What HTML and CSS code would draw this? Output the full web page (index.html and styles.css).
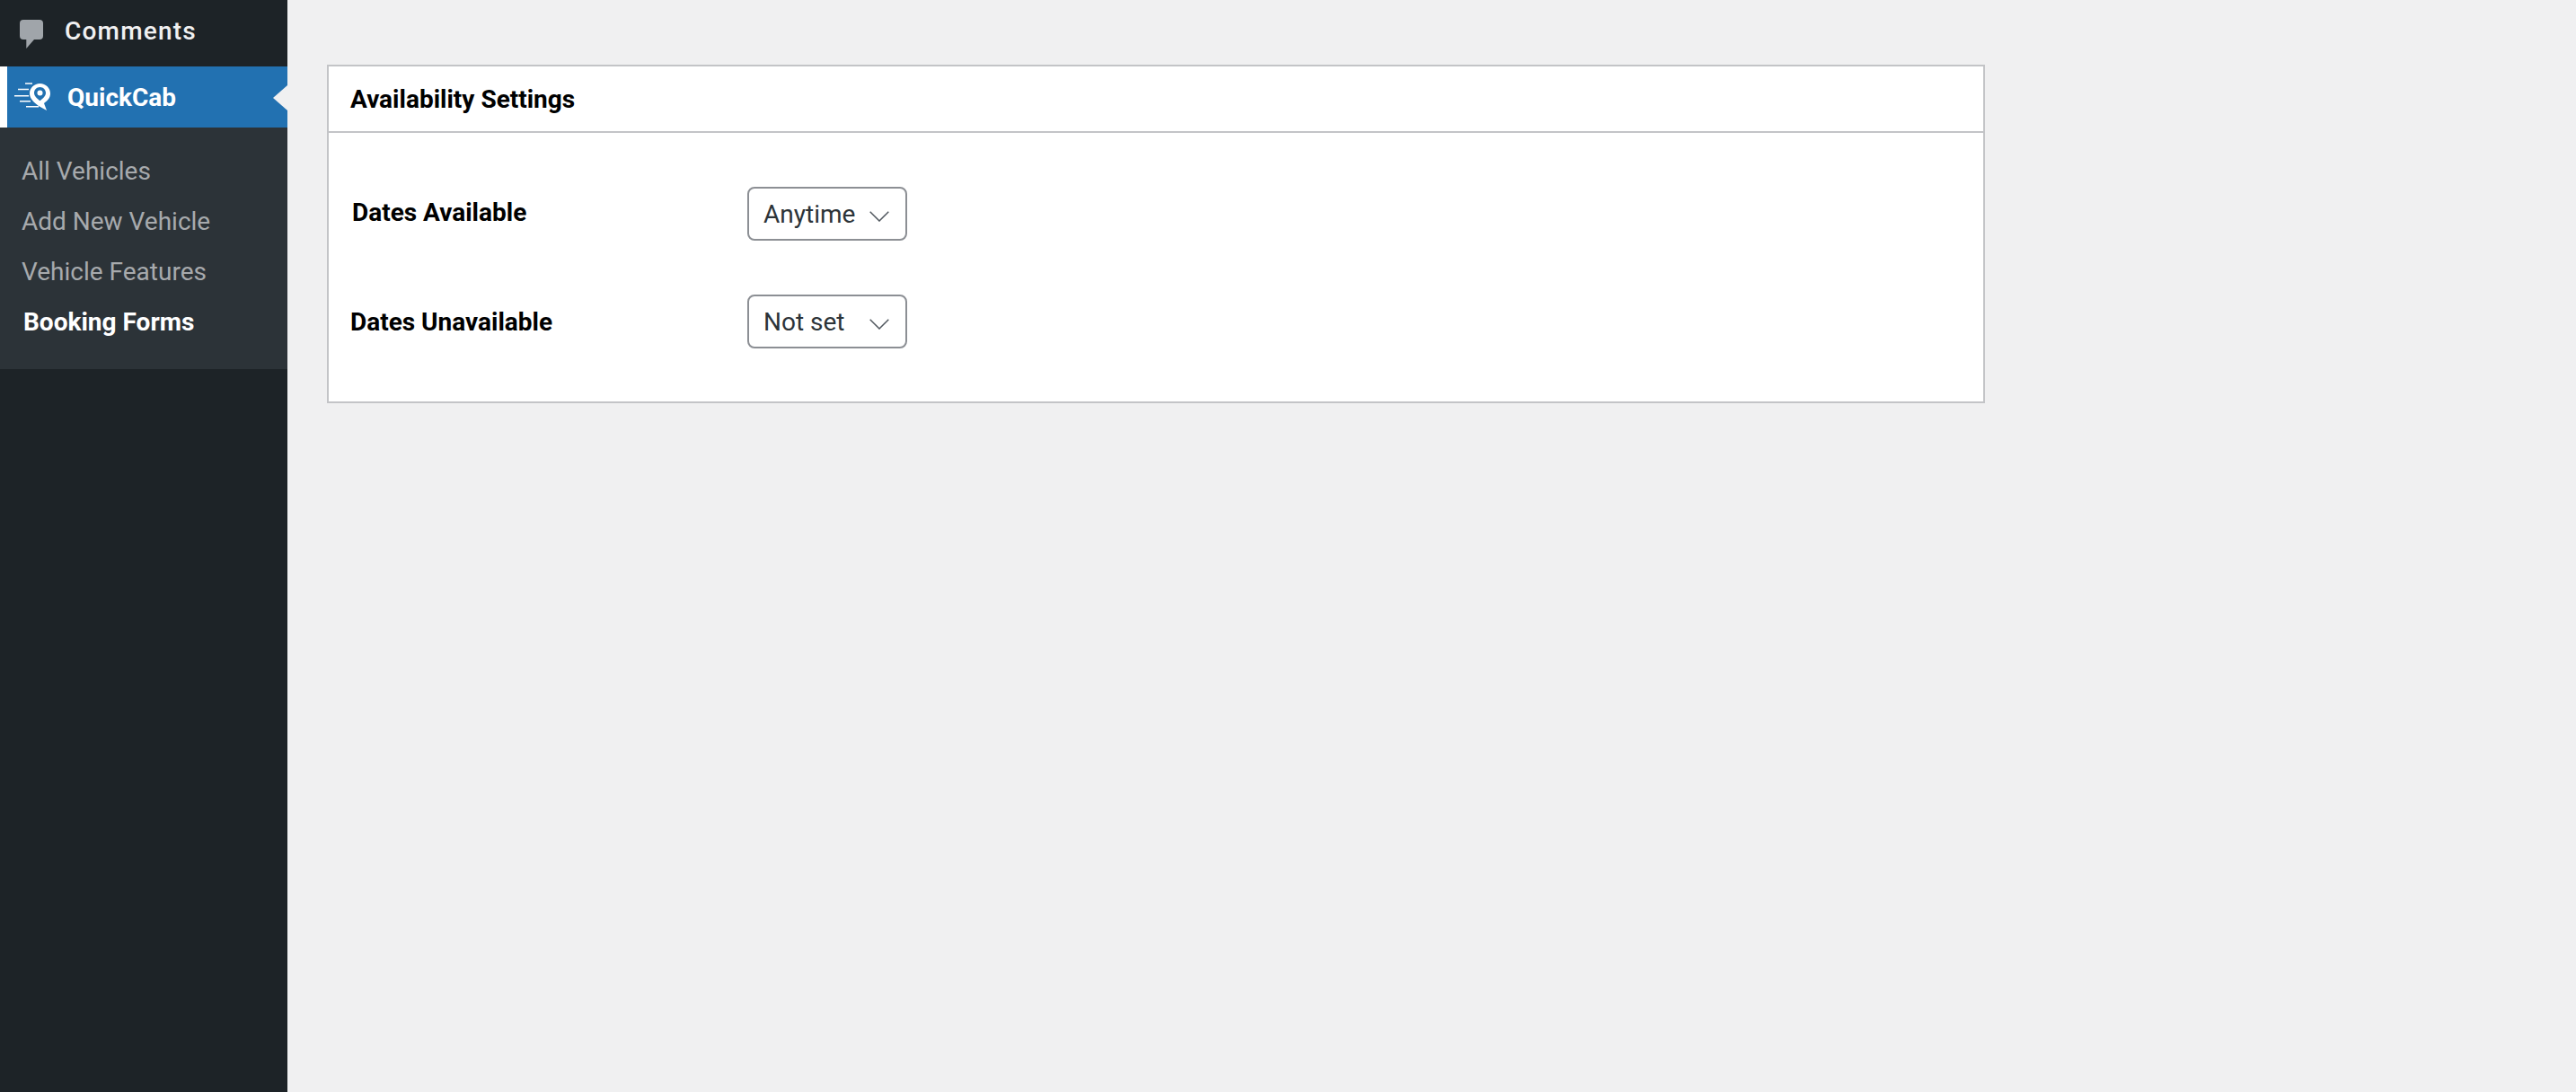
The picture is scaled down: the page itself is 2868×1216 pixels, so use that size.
FILE: index.html
```html
<!DOCTYPE html>
<html lang="en">
<head>
<meta charset="utf-8">
<title>Availability Settings</title>
<link rel="stylesheet" href="styles.css">
</head>
<body>
<div class="page">
  <nav class="sidebar">
    <a class="menu-item">
      <svg class="menu-icon" viewBox="0 0 26 32" width="26" height="32"><path d="M4 0h18a4 4 0 0 1 4 4v14a4 4 0 0 1-4 4H16l-8.700 10V22H4a4 4 0 0 1-4-4V4a4 4 0 0 1 4-4z" fill="#a0a5aa"/></svg>
      <span class="comments-label">Comments</span>
    </a>
    <a class="menu-item current">
      <svg class="brand-icon" viewBox="0 0 42 32" width="42" height="32">
        <path stroke="#fff" stroke-width="1.500" fill="none" d="M12 1h8M4 7.500h12M0 14.800h16M6 20.800h12M13 26.800h14"/>
        <path fill-rule="evenodd" fill="#fff" d="M28.500 1C22 1 17 6 17 12c0 6 5 10 10 14l9 5-3-8c4-3 7-6 7-11C40 6 35 1 28.500 1zM28.500 5c-3.600 0-6.500 2.900-6.500 6.500 0 3.300 3.200 6.300 6.500 8.800 3.300-2.500 6.500-5.500 6.500-8.800 0-3.600-2.900-6.500-6.500-6.500z"/>
        <circle cx="28.500" cy="11.500" r="3" fill="#fff"/>
      </svg>
      <span class="brand-label">QuickCab</span>
    </a>
    <ul class="submenu">
      <li>All Vehicles</li>
      <li>Add New Vehicle</li>
      <li>Vehicle Features</li>
      <li class="active">Booking Forms</li>
    </ul>
  </nav>
  <main class="content">
    <section class="card">
      <h2 class="card-title">Availability Settings</h2>
      <div class="card-body">
        <div class="row">
          <span class="field-label indent">Dates Available</span>
          <div class="select"><span>Anytime</span><svg viewBox="0 0 22 12" width="22" height="12"><path d="M.7.700L11 11 21.300.700" fill="none" stroke="#50575e" stroke-width="1.500"/></svg></div>
        </div>
        <div class="row">
          <span class="field-label">Dates Unavailable</span>
          <div class="select"><span>Not set</span><svg viewBox="0 0 22 12" width="22" height="12"><path d="M.7.700L11 11 21.300.700" fill="none" stroke="#50575e" stroke-width="1.500"/></svg></div>
        </div>
      </div>
    </section>
  </main>
</div>
</body>
</html>
```
FILE: styles.css
```css
* { box-sizing: border-box; }
html, body { margin: 0; padding: 0; }
body { background: #f0f0f1; font-family: Roboto, "Liberation Sans", sans-serif; }
.page { display: flex; width: 2868px; height: 1216px; overflow: hidden; }

.sidebar { width: 320px; flex: none; background: #1d2327; }
.menu-item { display: flex; align-items: center; position: relative; color: #f0f0f1; }
.menu-item:first-child { height: 74px; padding-left: 22px; }
.menu-icon { flex: none; margin-top: 2px; }
.comments-label { margin-left: 24px; margin-top: -4px; font-size: 28px; font-weight: 500; letter-spacing: 1.2px; line-height: 1; }
.current { height: 68px; background: #2271b1; border-left: 8px solid #fff; padding-left: 8px; color: #fff; }
.brand-icon { flex: none; }
.brand-label { margin-left: 17px; margin-top: 2px; font-size: 28px; font-weight: 700; line-height: 1; }
.current::after { content: ""; position: absolute; right: 0; top: 21px; border-style: solid; border-color: transparent #f0f0f1 transparent transparent; border-width: 14px 16px 14px 0; }

.submenu { list-style: none; margin: 0; padding: 21px 0 0; background: #2c3338; height: 269px; }
.submenu li { height: 56px; line-height: 56px; padding-left: 24px; font-size: 28px; color: #a7aaad; }
.submenu .active { padding-left: 26px; color: #fff; font-weight: 700; }

.content { flex: 1; padding: 72px 0 0 44px; }
.card { width: 1846px; height: 377px; background: #fff; border: 2px solid #c3c4c7; }
.card-title { margin: 0; height: 74px; padding-left: 24px; border-bottom: 2px solid #c3c4c7; font-size: 28px; font-weight: 700; line-height: 74px; color: #000; }
.card-body { padding-top: 60px; }
.row { display: flex; align-items: center; height: 60px; margin-bottom: 60px; }
.field-label { width: 466px; padding-left: 24px; font-size: 28px; font-weight: 700; color: #000; }
.indent { padding-left: 26px; margin-top: -4px; }
.select { display: flex; align-items: center; justify-content: space-between; width: 178px; height: 60px; padding: 0 18px 0 16px; border: 2px solid #8c8f94; border-radius: 8px; font-size: 28px; color: #2c3338; }
.select svg { flex: none; margin-top: 6px; }
```
